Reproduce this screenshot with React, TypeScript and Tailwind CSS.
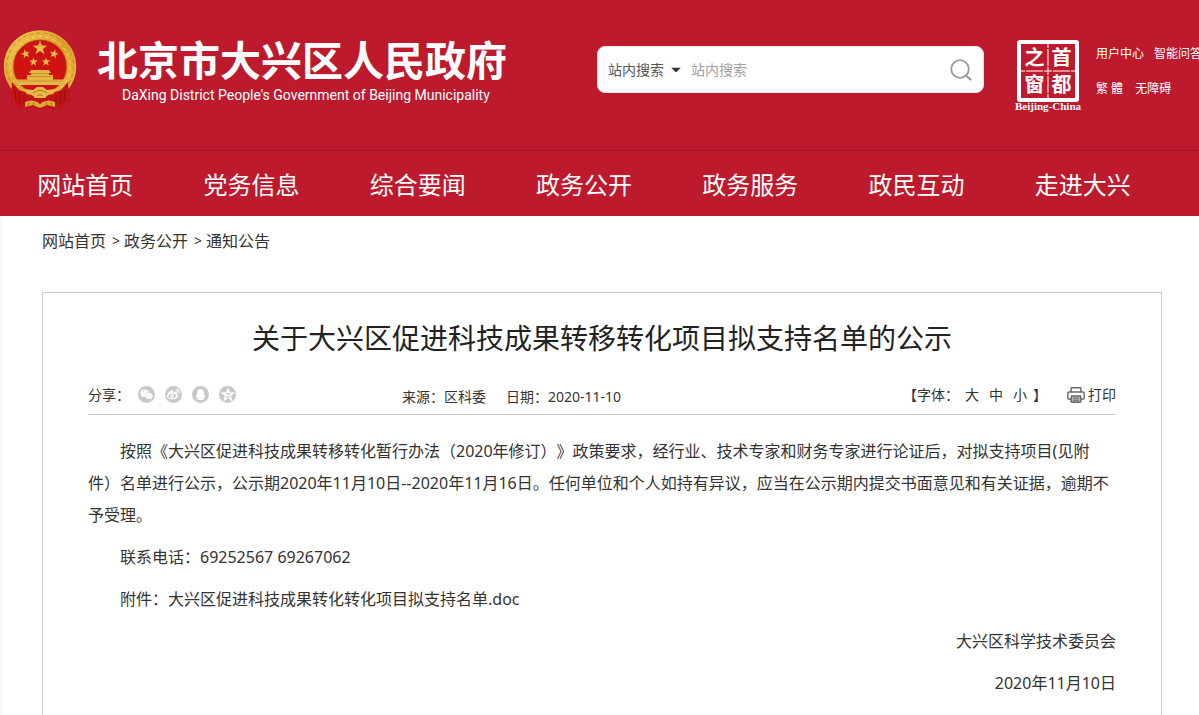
import { useState } from "react";
import type { ReactNode } from "react";
import { FaQq, FaWeibo, FaWeixin } from "react-icons/fa6";

const NAV_ITEMS = ["网站首页", "党务信息", "综合要闻", "政务公开", "政务服务", "政民互动", "走进大兴"];
const CRUMBS = ["网站首页", "政务公开", "通知公告"];

const FONT_SIZES = [
  { label: "大", className: "text-lg" },
  { label: "中", className: "text-base" },
  { label: "小", className: "text-sm" },
];

const STAR = "M0 -10 L2.4 -3.2 L9.5 -3.1 L3.8 1.2 L5.9 8.1 L0 4 L-5.9 8.1 L-3.8 1.2 L-9.5 -3.1 L-2.4 -3.2 Z";

function Emblem() {
  return (
    <svg viewBox="0 0 74 80" className="h-20 w-[74px] shrink-0" aria-hidden="true">
      <defs>
        <linearGradient id="gold" x1="0" y1="0" x2="1" y2="1">
          <stop offset="0" stopColor="#f0c850" />
          <stop offset="0.5" stopColor="#dc9f28" />
          <stop offset="1" stopColor="#edbb45" />
        </linearGradient>
      </defs>
      {/* wreath */}
      <circle cx="37" cy="36.5" r="31.5" fill="#cf1313" stroke="url(#gold)" strokeWidth="9.5" />
      <circle cx="37" cy="36.5" r="33.5" fill="none" stroke="#c48a26" strokeWidth="1" strokeDasharray="4 3" />
      <circle cx="37" cy="36.5" r="30" fill="none" stroke="#f8dc7c" strokeWidth="1" strokeDasharray="3 4" />
      <circle cx="37" cy="36.5" r="26.7" fill="none" stroke="#b4761b" strokeWidth="0.6" />
      {/* stars */}
      <g fill="#e8bb48">
        <path d={STAR} transform="translate(37 18) scale(0.76)" />
        <path d={STAR} transform="translate(22.5 24) rotate(-15) scale(0.48)" />
        <path d={STAR} transform="translate(51 24) rotate(15) scale(0.48)" />
        <path d={STAR} transform="translate(30.5 32) scale(0.46)" />
        <path d={STAR} transform="translate(43 32) scale(0.46)" />
      </g>
      {/* gate */}
      <path d="M28 40 H46 L48 43 H46 V45 H50 V49.5 H62 L59 55 H15 L12 49.5 H24 V45 H28 V43 H26 Z" fill="#e6b548" />
      <path d="M24 46.5 H50 M14 51 H60 M28 43.5 H46" stroke="#c48a1f" strokeWidth="0.8" />
      {/* ribbons and drapery */}
      <path d="M9 52 L16 60 L29 64 L37 67 L45 64 L58 60 L65 52 L67 73 L62 72 L59 78 L53 76 L51 79 H23 L21 76 L15 78 L12 72 L8 73 Z" fill="#c21414" />
      <path d="M12 60 L13 71 M16 62 L17 75 M21 65 L21 75 M62 60 L61 71 M58 62 L57 75 M53 65 L53 75" stroke="#8e0f10" strokeWidth="1" />
      {/* gear and ears of grain */}
      <path d="M20 59 L30 60 L34 57 H40 L44 60 L54 59 L50 64 L45 65 L42 68 H32 L29 65 L24 64 Z" fill="#eabb4a" />
      <path d="M30 63 Q37 58 44 63 M34 66 Q37 63 40 66" fill="none" stroke="#b4761b" strokeWidth="1" />
      <path d="M22 72 Q29 69 34 72 L37 74 L40 72 Q45 69 52 72 V77 L44 75 L37 78 L30 75 L22 77 Z" fill="#e0ab3a" />
      <path d="M26 72 L25 76 M31 72 L30 75 M43 72 L44 75 M48 72 L49 76" stroke="#b4761b" strokeWidth="1" />
    </svg>
  );
}

function Seal() {
  return (
    <a href="#capital" className="flex w-[68px] shrink-0 flex-col items-center text-white">
      <span className="relative grid size-[62px] grid-cols-2 grid-rows-2 place-items-center rounded-[3px] border-4 border-white text-xl leading-5 font-bold">
        <svg viewBox="0 0 54 54" className="absolute inset-0 size-full" aria-hidden="true">
          <path d="M27 0 V54 M0 27 H54" stroke="#fff" strokeWidth="1" strokeDasharray="4 1 17 1 8 1 17 1" />
        </svg>
        <span>之</span>
        <span>首</span>
        <span>窗</span>
        <span>都</span>
      </span>
      <span className="font-['Liberation_Serif',serif] text-[11px] leading-2 font-bold whitespace-nowrap">
        Beijing-China
      </span>
    </a>
  );
}

function SearchBox() {
  return (
    <form
      className="flex h-[47px] w-[387px] shrink-0 items-center rounded-lg border border-gray-200 bg-white px-2.5 text-sm"
      onSubmit={(e) => e.preventDefault()}
    >
      <div className="relative w-[73px] shrink-0">
        <select aria-label="搜索范围" className="w-full appearance-none bg-transparent text-[#555] outline-none">
          <option>站内搜索</option>
        </select>
        <svg viewBox="0 0 10 5" className="pointer-events-none absolute top-1/2 right-0 h-[5px] w-2.5 -translate-y-1/2">
          <path d="M0 0 H10 L5 5 Z" fill="#333" />
        </svg>
      </div>
      <input
        type="text"
        aria-label="站内搜索"
        placeholder="站内搜索"
        className="ml-2.5 min-w-0 flex-1 bg-transparent text-[#333] outline-none placeholder:text-[#a0a0a0]"
      />
      <button type="submit" aria-label="搜索" className="shrink-0">
        <svg viewBox="0 0 24 24" className="size-6" fill="none" stroke="#999" strokeWidth="1.8" strokeLinecap="round">
          <circle cx="11" cy="11" r="8.8" />
          <path d="M17 17.5 L21.5 21.5" strokeWidth="2.2" />
        </svg>
      </button>
    </form>
  );
}

function Header() {
  return (
    <header className="bg-[#bd1a2d] text-white">
      <div className="flex h-[150px] items-start overflow-hidden pl-[3px]">
        <a href="#home" className="mt-[30px] flex w-[594px] shrink-0">
          <Emblem />
          <span className="ml-5 flex flex-col pt-[7px]">
            <span className="text-[41px] leading-[46px] font-bold whitespace-nowrap">北京市大兴区人民政府</span>
            <span className="pt-0.5 pl-[25px] font-[Roboto,sans-serif] text-sm leading-5 whitespace-nowrap">
              DaXing District People's Government of Beijing Municipality
            </span>
          </span>
        </a>
        <div className="mt-[46px] shrink-0">
          <SearchBox />
        </div>
        <div className="mt-10 ml-[30px]">
          <Seal />
        </div>
        <div className="mt-9 ml-3.5 shrink-0 text-xs leading-[35px] whitespace-nowrap">
          <div className="flex gap-2.5">
            <a href="#user">用户中心</a>
            <a href="#qa">智能问答</a>
          </div>
          <div className="flex gap-3">
            <a href="#traditional">繁 體</a>
            <a href="#accessible">无障碍</a>
          </div>
        </div>
      </div>
      <nav className="grid h-[66px] grid-cols-7 border-t border-[#8f1522] pr-[33px] pl-0.5 text-center text-2xl leading-[68px]">
        {NAV_ITEMS.map((item) => (
          <a key={item} href="#nav" className="whitespace-nowrap">
            {item}
          </a>
        ))}
      </nav>
    </header>
  );
}

function ShareButton({ label, children }: { label: string; children: ReactNode }) {
  return (
    <button
      type="button"
      aria-label={label}
      className="flex size-[17px] items-center justify-center rounded-full bg-[#c8c8c8] text-white"
    >
      {children}
    </button>
  );
}

function PrintIcon() {
  return (
    <svg viewBox="0 0 18 16" className="h-4 w-[18px]" fill="none" stroke="#666" strokeWidth="1.4" aria-hidden="true">
      <path d="M4 5 V1.5 Q4 0.8 4.7 0.8 H13.3 Q14 0.8 14 1.5 V5" />
      <path d="M4 12 H2 Q0.8 12 0.8 10.8 V6.5 Q0.8 5 2.3 5 H15.7 Q17.2 5 17.2 6.5 V10.8 Q17.2 12 16 12 H14" />
      <path d="M4.5 9 H13.5 L14 14.2 Q14 15.2 13 15.2 H5 Q4 15.2 4 14.2 Z" fill="#bbb" />
      <path d="M6 11.2 H12 M6 13.2 H12" strokeWidth="1" />
    </svg>
  );
}

export default function App() {
  const [size, setSize] = useState("text-base");

  return (
    <div className="min-h-screen overflow-hidden bg-[#f7f7f7] font-['Noto_Sans','Noto_Sans_CJK_SC',sans-serif] text-[#333] [text-spacing-trim:space-all]">
      <Header />

      <main className="ml-0.5 bg-white pr-[37px] pl-10">
        {/* Breadcrumb */}
        <div className="flex h-[76px] items-start gap-1.5 pt-[11px] text-base leading-7">
          {CRUMBS.map((crumb, i) => (
            <span key={crumb} className="flex gap-1">
              {i > 0 && <span className="text-sm leading-7">&gt;</span>}
              <a href="#crumb">{crumb}</a>
            </span>
          ))}
        </div>

        <article className="border border-[#ccc] px-[45px] pb-12">
          <h1 className="pt-6 text-center text-[28px] leading-[42px] text-[#222]">
            关于大兴区促进科技成果转移转化项目拟支持名单的公示
          </h1>

          {/* Share, source and tools */}
          <div className="mt-4 grid h-10 grid-cols-[314px_1fr_auto] items-center border-b border-[#ccc] text-sm">
            <div className="flex items-center gap-2.5">
              <span className="w-10 whitespace-nowrap">分享：</span>
              <ShareButton label="微信">
                <FaWeixin className="size-[13px]" />
              </ShareButton>
              <ShareButton label="微博">
                <FaWeibo className="size-[13px]" />
              </ShareButton>
              <ShareButton label="QQ">
                <FaQq className="size-[11px]" />
              </ShareButton>
              <ShareButton label="QQ空间">
                <svg viewBox="-12 -12 24 24" className="size-4" fill="currentColor">
                  <path d={STAR} stroke="#fff" strokeWidth="1.5" strokeLinejoin="round" />
                  <path d="M-4 -2 Q0 -3 3.5 -2 L-3 3 Q1 3.8 4.5 3" fill="none" stroke="#c8c8c8" strokeWidth="1.4" />
                </svg>
              </ShareButton>
            </div>
            <div className="flex gap-5 pt-1 whitespace-nowrap">
              <span>来源：区科委</span>
              <span>日期：2020-11-10</span>
            </div>
            <div className="flex items-center whitespace-nowrap">
              <span>【字体：</span>
              <span className="ml-1.5 flex gap-2.5">
                {FONT_SIZES.map((f) => (
                  <button key={f.label} type="button" onClick={() => setSize(f.className)}>
                    {f.label}
                  </button>
                ))}
              </span>
              <span className="ml-1.5">】</span>
              <button type="button" className="ml-5 flex items-center gap-[3px]" onClick={() => window.print()}>
                <PrintIcon />
                打印
              </button>
            </div>
          </div>

          <div className={`space-y-2.5 pt-5 ${size}`}>
            <p className="indent-8 leading-8">
              按照《大兴区促进科技成果转移转化暂行办法（2020年修订）》政策要求，经行业、技术专家和财务专家进行论证后，对拟支持项目(见附件）名单进行公示，公示期2020年11月10日--2020年11月16日。任何单位和个人如持有异议，应当在公示期内提交书面意见和有关证据，逾期不予受理。
            </p>
            <p className="indent-8 leading-8">联系电话：69252567 69267062</p>
            <p className="indent-8 leading-8">
              附件：<a href="#attachment">大兴区促进科技成果转化转化项目拟支持名单.doc</a>
            </p>
            <p className="text-right leading-8">大兴区科学技术委员会</p>
            <p className="text-right leading-8">2020年11月10日</p>
          </div>
        </article>
      </main>
    </div>
  );
}
